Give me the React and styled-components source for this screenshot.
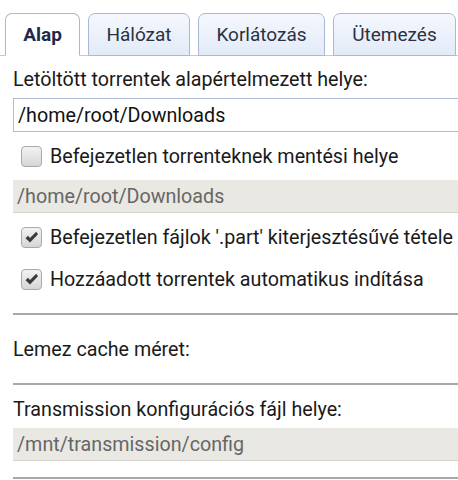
import styled, { createGlobalStyle } from "styled-components";

const Global = createGlobalStyle`
  body {
    margin: 0;
    background: #fff;
    font-family: Roboto, "Liberation Sans", sans-serif;
    overflow: hidden;
  }
`;

const tabs = [
  { name: "Alap", w: 75 },
  { name: "Hálózat", w: 102 },
  { name: "Korlátozás", w: 127 },
  { name: "Ütemezés", w: 123 },
];

const Check = ({ checked }) => (
  <Box>
    {checked && (
      <svg width="15" height="13" viewBox="0 0 15 13">
        <path
          d="M1.5 7.2 L4 4.8 L6 7 L12.2 0.8 L14 3.2 L6 11.6 Z"
          fill="#3a3a3a"
        />
      </svg>
    )}
  </Box>
);

const App = () => {
  return (
    <Page>
      <Global />
      <TabBar>
        {tabs.map((t, i) => (
          <Tab key={t.name} $active={i === 0} $w={t.w}>
            {t.name}
          </Tab>
        ))}
      </TabBar>
      <Content>
        <Label>Letöltött torrentek alapértelmezett helye:</Label>
        <Input>/home/root/Downloads</Input>
        <CheckRow>
          <Check />
          <span>Befejezetlen torrenteknek mentési helye</span>
        </CheckRow>
        <Disabled>/home/root/Downloads</Disabled>
        <CheckRow>
          <Check checked />
          <span>Befejezetlen fájlok '.part' kiterjesztésűvé tétele</span>
        </CheckRow>
        <CheckRow $tight>
          <Check checked />
          <span>Hozzáadott torrentek automatikus indítása</span>
        </CheckRow>
        <Rule $top={23} />
        <Label $top={25}>Lemez cache méret:</Label>
        <Rule $top={23} />
        <Label $top={15}>Transmission konfigurációs fájl helye:</Label>
        <Disabled $top={8}>/mnt/transmission/config</Disabled>
        <Rule $top={16} />
      </Content>
    </Page>
  );
};

const Page = styled.div`
  width: 458px;
  height: 480px;
  overflow: hidden;
`;

const TabBar = styled.div`
  display: flex;
  gap: 8px;
  padding: 13px 0 0 5px;
  border-bottom: 1px solid #c3cad6;
  height: 42px;
`;

const Tab = styled.div`
  width: ${(p) => p.$w}px;
  flex-shrink: 0;
  height: 43px;
  box-sizing: border-box;
  display: flex;
  align-items: center;
  justify-content: center;
  font-size: 19px;
  border: 1px solid #a9b9d3;
  border-radius: 7px 7px 0 0;
  color: ${(p) => (p.$active ? "#1c2b4a" : "#2a3142")};
  font-weight: ${(p) => (p.$active ? 700 : 400)};
  background: ${(p) =>
    p.$active ? "#fff" : "linear-gradient(#f4f7fd, #e3ebf8)"};
  border-bottom-color: ${(p) => (p.$active ? "#fff" : "#a9b9d3")};
  margin-bottom: -1px;
`;

const Content = styled.div`
  padding-left: 13px;
  display: flex;
  flex-direction: column;
`;

const Label = styled.div`
  font-size: 19.7px;
  color: #1a1a1a;
  line-height: 20px;
  white-space: nowrap;
  margin-top: ${(p) => (p.$top ?? 14)}px;
`;

const Input = styled.div`
  margin-top: 8px;
  height: 34px;
  box-sizing: border-box;
  border: 1px solid #aebcd6;
  border-right: none;
  padding-left: 4px;
  display: flex;
  align-items: center;
  font-size: 19.7px;
  color: #111;
`;

const CheckRow = styled.div`
  display: flex;
  align-items: center;
  gap: 8px;
  padding-left: 8px;
  height: 22px;
  font-size: 19.7px;
  white-space: nowrap;
  color: #1a1a1a;
  margin-top: ${(p) => (p.$tight ? 20 : 13)}px;
`;

const Box = styled.div`
  width: 21px;
  height: 21px;
  box-sizing: border-box;
  border: 1px solid #a9a9a9;
  border-radius: 4px;
  background: linear-gradient(#f2f2f2, #d6d6d6);
  display: flex;
  align-items: center;
  justify-content: center;
  flex-shrink: 0;
`;

const Disabled = styled.div`
  margin-top: ${(p) => (p.$top ?? 13)}px;
  height: 33px;
  box-sizing: border-box;
  background: #e9e8e2;
  border-bottom: 1px solid #d3d2cc;
  padding-left: 4px;
  display: flex;
  align-items: center;
  font-size: 19.7px;
  color: #666;
`;

const Rule = styled.div`
  margin-top: ${(p) => p.$top}px;
  height: 2px;
  background: #a8a8a8;
`;

export default App;
